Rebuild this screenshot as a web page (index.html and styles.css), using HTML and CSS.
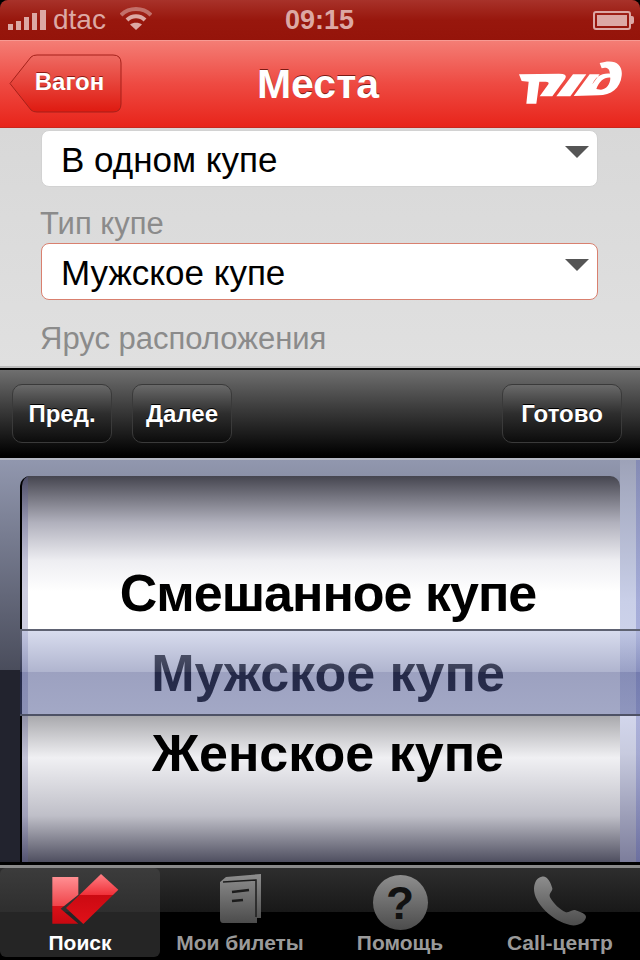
FILE: index.html
```html
<!DOCTYPE html>
<html lang="ru">
  <head>
    <meta charset="UTF-8" />
    <meta name="viewport" content="width=device-width, initial-scale=1.0" />
    <title>Места</title>
    <link rel="stylesheet" href="styles.css">
  </head>
  <body>
    <div class="screen">
      <div class="status-bar">
        <div class="status-left">
          <svg class="signal" width="38" height="20" viewBox="0 0 38 20">
            <rect x="0" y="14" width="5" height="6" />
            <rect x="8" y="11" width="5" height="9" />
            <rect x="16" y="7" width="5" height="13" />
            <rect x="24" y="3" width="5" height="17" />
            <rect x="32" y="0" width="6" height="20" />
          </svg>
          <span class="carrier">dtac</span>
          <svg class="wifi" width="32" height="24" viewBox="0 0 32 24">
            <path class="wifi-far" d="M1 8 C9 0 23 0 31 8" />
            <path class="wifi-near" d="M7 13 C12 8 20 8 25 13" />
            <path class="wifi-dot" d="M16 23 L10 17.5 C13 15 19 15 22 17.5 Z" />
          </svg>
        </div>
        <span class="clock">09:15</span>
        <div class="battery">
          <div class="battery-body"><div class="battery-level"></div></div>
          <div class="battery-tip"></div>
        </div>
      </div>

      <header class="nav-bar">
        <a class="back-button">
          <svg class="back-shape" width="113" height="59" viewBox="0 0 113 59">
            <defs>
              <linearGradient id="backFill" x1="0" y1="0" x2="0" y2="1">
                <stop offset="0" stop-color="#ee6a62" />
                <stop offset="1" stop-color="#df1a10" />
              </linearGradient>
            </defs>
            <path d="M1 29.5 L22 3 Q24 1 28 1 L104 1 Q112 1 112 9 L112 50 Q112 58 104 58 L28 58 Q24 58 22 56 Z" fill="url(#backFill)" stroke="#a5211a" stroke-width="1" />
          </svg>
          <span class="back-label">Вагон</span>
        </a>
        <h1 class="nav-title">Места</h1>
        <svg class="rzd-logo" width="104" height="46" viewBox="30 22 312 138">
          <path d="M30 62 L150 60 Q178 60 168 76 L130 128 L92 128 L118 92 Q122 84 110 84 L91 84 L82 150 L52 150 L59 84 L38 82 Z" />
          <path d="M192 62 L232 62 L184 128 L142 128 Z" />
          <path fill-rule="evenodd" d="M272 28 C318 14 342 32 338 66 C334 104 306 124 268 125 L194 127 L242 62 L272 62 L250 92 C258 72 276 58 302 60 C304 46 292 38 278 44 Z M304 72 C286 70 270 84 262 106 L276 108 C292 106 304 92 304 72 Z" />
        </svg>
      </header>

      <main class="form">
        <div class="select-box">
          <span class="select-text">В одном купе</span>
          <span class="select-arrow"></span>
        </div>
        <label class="field-label">Тип купе</label>
        <div class="select-box select-focus">
          <span class="select-text">Мужское купе</span>
          <span class="select-arrow"></span>
        </div>
        <label class="field-label field-last">Ярус расположения</label>
      </main>

      <div class="toolbar">
        <button class="tool-button">Пред.</button>
        <button class="tool-button">Далее</button>
        <button class="tool-button tool-done">Готово</button>
      </div>

      <section class="picker">
        <div class="wheel">
          <div class="wheel-row row-top">Смешанное купе</div>
          <div class="wheel-row">Мужское купе</div>
          <div class="wheel-row">Женское купе</div>
        </div>
        <div class="picker-selection"></div>
      </section>

      <nav class="tab-bar">
        <div class="tab tab-active">
          <svg class="tab-icon" width="90" height="60" viewBox="-15 0 270 180">
            <defs>
              <linearGradient id="redLeft" x1="0" y1="0" x2="0" y2="1">
                <stop offset="0" stop-color="#ff8f92" />
                <stop offset="0.62" stop-color="#f0444a" />
                <stop offset="0.63" stop-color="#d81018" />
                <stop offset="1" stop-color="#c80810" />
              </linearGradient>
              <linearGradient id="redRight" x1="0" y1="0" x2="0" y2="1">
                <stop offset="0" stop-color="#ff8085" />
                <stop offset="0.42" stop-color="#f03038" />
                <stop offset="0.43" stop-color="#cc0a12" />
                <stop offset="1" stop-color="#e01018" />
              </linearGradient>
            </defs>
            <path d="M37 27 L115 27 L115 80 L62 122 L115 167 L37 167 Z" fill="url(#redLeft)" />
            <path d="M183 18 L235 65 L130 168 L78 120 Z" fill="url(#redRight)" />
          </svg>
          <span class="tab-label">Поиск</span>
        </div>
        <div class="tab">
          <svg class="tab-icon" width="90" height="60" viewBox="0 0 90 60">
            <defs>
              <linearGradient id="grayIcon" x1="0" y1="0" x2="0" y2="1">
                <stop offset="0" stop-color="#8e8e8e" />
                <stop offset="1" stop-color="#4c4c4c" />
              </linearGradient>
            </defs>
            <path d="M25 14 L31 9 L66 6 L66 50 L62 50 L62 55 L28 55 Q25 55 25 51 Z" fill="url(#grayIcon)" />
            <path d="M28 14 L61 12 L61 49" fill="none" stroke="#1c1c1c" stroke-width="1.5" />
            <path d="M37 24 L54 22 M37 33 L48 32" stroke="#1c1c1c" stroke-width="2.5" />
          </svg>
          <span class="tab-label">Мои билеты</span>
        </div>
        <div class="tab">
          <div class="help-icon"><span>?</span></div>
          <span class="tab-label">Помощь</span>
        </div>
        <div class="tab">
          <svg class="tab-icon" width="90" height="60" viewBox="495 24 270 180">
            <defs>
              <linearGradient id="grayPhone" x1="0" y1="0" x2="0" y2="1">
                <stop offset="0" stop-color="#8e8e8e" />
                <stop offset="1" stop-color="#4c4c4c" />
              </linearGradient>
            </defs>
            <path transform="translate(-90 0)" d="M665 50 C680 45 692 65 697 85 C698 95 685 100 690 112 C700 130 720 150 738 157 C748 158 755 148 765 150 C780 155 800 162 798 172 C795 190 770 200 750 195 C700 185 640 130 642 85 C643 65 652 52 665 50 Z" fill="url(#grayPhone)" />
          </svg>
          <span class="tab-label">Call-центр</span>
        </div>
      </nav>
    </div>
  </body>
</html>
```

FILE: styles.css
```css
body {
  margin: 0;
  padding: 0;
  background-color: #000;
  font-family: "Liberation Sans", Arial, sans-serif;
}
.screen {
  width: 640px;
  height: 960px;
  display: flex;
  flex-direction: column;
  overflow: hidden;
}

/* status bar */
.status-bar {
  height: 40px;
  flex: none;
  display: grid;
  grid-template-columns: 1fr auto 1fr;
  align-items: center;
  padding: 0 6px 0 8px;
  box-sizing: border-box;
  background: linear-gradient(#a8322a, #98170d 50%, #95140a);
  border-radius: 8px 8px 0 0;
  color: #dca8a4;
  font-size: 28px;
}
.status-left {
  display: flex;
  align-items: center;
}
.signal {
  fill: #dca8a4;
  margin-top: -1px;
}
.carrier {
  margin-left: 7px;
}
.wifi {
  margin-left: 14px;
  margin-top: -2px;
}
.wifi path {
  fill: none;
  stroke-width: 4;
}
.wifi .wifi-far {
  stroke: #c2706a;
}
.wifi .wifi-near {
  stroke: #dca8a4;
}
.wifi .wifi-dot {
  fill: #dca8a4;
  stroke: none;
}
.clock {
  font-size: 27px;
  font-weight: bold;
  margin-left: -3px;
}
.battery {
  justify-self: end;
  display: flex;
  align-items: center;
}
.battery-body {
  width: 38px;
  height: 19px;
  box-sizing: border-box;
  border: 2px solid #dca8a4;
  border-radius: 3px;
  padding: 2px;
}
.battery-level {
  height: 100%;
  background-color: #dca8a4;
}
.battery-tip {
  width: 3px;
  height: 8px;
  background-color: #dca8a4;
  border-radius: 0 2px 2px 0;
}

/* nav bar */
.nav-bar {
  height: 88px;
  flex: none;
  display: grid;
  grid-template-columns: 1fr auto 1fr;
  align-items: center;
  padding: 0 17px 0 9px;
  box-sizing: border-box;
  background: linear-gradient(#f47d75, #ee4a42 50%, #e8241a);
  border-top: 1px solid #f79a93;
  border-bottom: 1px solid #c9261c;
}
.back-button {
  position: relative;
  width: 113px;
  height: 59px;
  margin-top: -2px;
  display: flex;
  align-items: center;
  justify-content: center;
  padding-left: 8px;
  box-sizing: border-box;
}
.back-shape {
  position: absolute;
  left: 0;
  top: 0;
}
.back-label {
  position: relative;
  margin-top: -2px;
  color: #fff;
  font-size: 24px;
  font-weight: bold;
  text-shadow: 0 -1px 0 #8c1a14;
}
.nav-title {
  margin: 0 0 0 4px;
  color: #fff;
  font-size: 41px;
  font-weight: bold;
  text-shadow: 0 -1px 0 #7a1a14;
}
.rzd-logo {
  justify-self: end;
  fill: #fff;
}

/* form */
.form {
  height: 240px;
  flex: none;
  padding: 2px 42px 0 41px;
  box-sizing: border-box;
  background: linear-gradient(#d8d8d8, #e0e0e0);
  border-bottom: 2px solid #bdbdbd;
}
.select-box {
  height: 57px;
  display: flex;
  align-items: center;
  justify-content: space-between;
  padding: 0 8px 0 19px;
  box-sizing: border-box;
  background-color: #fff;
  border-radius: 8px;
  border: 1px solid #d2d2d2;
  font-size: 35px;
  color: #000;
}
.select-text {
  padding-top: 3px;
}
.select-focus {
  border-color: #d9806f;
}
.select-arrow {
  width: 0;
  height: 0;
  border-left: 12px solid transparent;
  border-right: 12px solid transparent;
  border-top: 12px solid #555;
  margin-top: -14px;
}
.field-label {
  display: block;
  height: 56px;
  padding-top: 21px;
  box-sizing: border-box;
  font-size: 31px;
  line-height: 32px;
  color: #8b8b8b;
  margin-left: -1px;
}
.field-last {
  height: 68px;
  padding-top: 23px;
}

/* toolbar */
.toolbar {
  height: 92px;
  flex: none;
  display: flex;
  align-items: flex-start;
  gap: 20px;
  padding: 14px 18px 0 12px;
  box-sizing: border-box;
  background: linear-gradient(#6f6f6f, #3a3a3a 45%, #000 97%);
  border-top: 2px solid #000;
  border-bottom: 2px solid #b5b8c4;
}
.tool-button {
  width: 100px;
  height: 59px;
  padding: 0;
  border: 1px solid #3a3a3a;
  border-radius: 10px;
  background: linear-gradient(#6a6a6a, #2e2e2e 50%, #0c0c0c);
  color: #fff;
  font-family: inherit;
  font-size: 24px;
  font-weight: bold;
  text-shadow: 0 -1px 0 #000;
}
.tool-done {
  width: 120px;
  margin-left: auto;
}

/* picker */
.picker {
  position: relative;
  height: 405px;
  flex: none;
  padding: 16px 20px 0 20px;
  box-sizing: border-box;
  border-bottom: 3px solid #000;
  background:
    linear-gradient(rgba(60, 70, 170, 0.25), rgba(60, 70, 170, 0.25)) right top / 4px 100% no-repeat,
    linear-gradient(#9da2b8, #c9cfe8 35%, #d4d8ee 62%, #c8cbdf 73%, #7c7d9b 100%) right top / 20px 100% no-repeat,
    linear-gradient(#9197ae, #4a4d5c 52.3%, #22232e 52.3%, #22232e);
}
.wheel {
  height: 386px;
  box-sizing: border-box;
  border-left: 2px solid #000;
  border-radius: 10px 10px 0 0;
  background:
    linear-gradient(rgba(90, 90, 150, 0.3), rgba(90, 90, 150, 0.3)) left top / 6px 100% no-repeat,
    linear-gradient(#45454f, #b0b0bc 12%, #eeeef2 22%, #fff 30%, #fff 62%, #a8a8ac 62%, #f0f0f3 73%, #bfbfc8 88%, #4f4f60 100%);
  padding: 77px 0 0 14px;
  text-align: center;
  font-size: 52px;
  font-weight: bold;
  color: #000;
}
.wheel-row {
  height: 80px;
  line-height: 80px;
}
.row-top {
  letter-spacing: -1px;
}
.picker-selection {
  position: absolute;
  left: 20px;
  right: 0;
  top: 169px;
  height: 87px;
  box-sizing: border-box;
  border-top: 2px solid #5e6272;
  border-bottom: 2px solid #4e5266;
  background: linear-gradient(rgba(181, 189, 223, 0.53), rgba(106, 115, 164, 0.53) 49%, rgba(68, 77, 136, 0.53) 49%, rgba(81, 91, 147, 0.53));
}

/* tabs */
.tab-bar {
  height: 95px;
  flex: none;
  display: grid;
  grid-template-columns: repeat(4, 1fr);
  box-sizing: border-box;
  background: linear-gradient(#2e2e2e, #181818 48%, #000 48%);
  border-top: 3px solid #8a8a8a;
}
.tab {
  height: 89px;
  display: flex;
  flex-direction: column;
  align-items: center;
  border-radius: 6px;
}
.tab-active {
  background: linear-gradient(#3c3c3c, #2e2e2e 49.4%, #252525 49.4%);
}
.tab-icon {
  display: block;
  flex: none;
  height: 60px;
}
.help-icon {
  width: 55px;
  height: 55px;
  margin-top: 7px;
  margin-bottom: -2px;
  border-radius: 50%;
  background: linear-gradient(#8e8e8e, #4c4c4c);
  display: flex;
  align-items: center;
  justify-content: center;
  color: #111;
  font-size: 46px;
  font-weight: bold;
}
.tab-label {
  font-size: 21px;
  font-weight: bold;
  line-height: 24px;
  margin-top: 3px;
  color: #9a9a9a;
}
.tab-active .tab-label {
  color: #fff;
}
```
